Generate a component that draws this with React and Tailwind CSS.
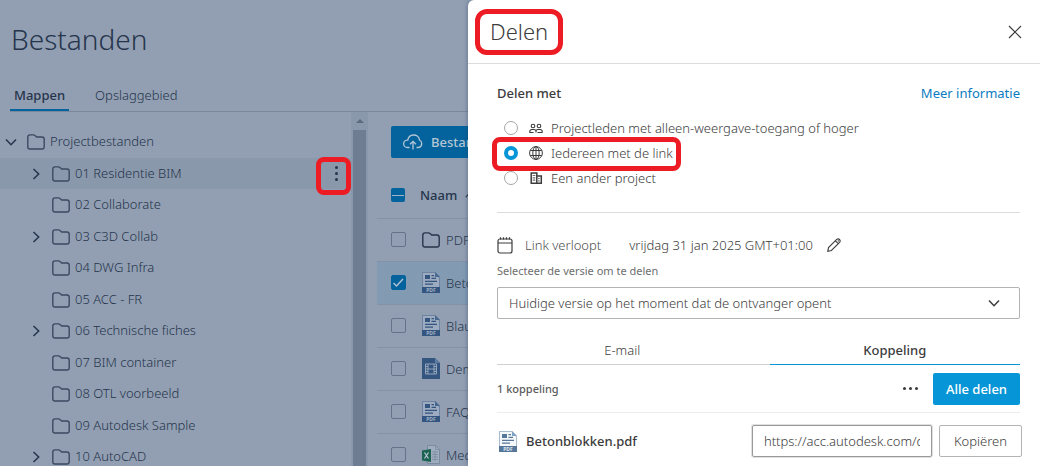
import React, { useState } from 'react';

const FOLDERS = [
  { name: '01 Residentie BIM', expandable: true, active: true },
  { name: '02 Collaborate' },
  { name: '03 C3D Collab', expandable: true },
  { name: '04 DWG Infra' },
  { name: '05 ACC - FR' },
  { name: '06 Technische fiches', expandable: true },
  { name: '07 BIM container' },
  { name: '08 OTL voorbeeld' },
  { name: '09 Autodesk Sample' },
  { name: '10 AutoCAD', expandable: true },
];

const FILES = [
  { name: 'PDF', type: 'folder' },
  { name: 'Betonblokken.pdf', type: 'pdf' },
  { name: 'Blau', type: 'pdf' },
  { name: 'Dem', type: 'video' },
  { name: 'FAQ', type: 'pdf' },
  { name: 'Med', type: 'excel' },
];

const SHARE_OPTIONS = [
  { id: 'members', label: 'Projectleden met alleen-weergave-toegang of hoger', Icon: PeopleIcon },
  { id: 'link', label: 'Iedereen met de link', Icon: GlobeIcon, marked: true },
  { id: 'project', label: 'Een ander project', Icon: BuildingIcon },
];

function Chevron({ className }) {
  return (
    <svg viewBox="0 0 12 12" className={className} fill="none" stroke="currentColor" strokeWidth="1.5">
      <path d="M1 3.5 6 8.7l5-5.2" />
    </svg>
  );
}

function FolderIcon({ className }) {
  return (
    <svg viewBox="0 0 18 16" className={className} fill="none" stroke="currentColor" strokeWidth="1.4">
      <path d="M.8 3.2Q.8.9 3 .9h3.4c.9 0 1.3.3 1.9.9l.9.8c.4.3.8.4 1.3.4h4.5q2.200 0 2.200 2.200v7.500q0 2.300-2.200 2.300H3Q.8 15 .8 12.700Z" />
    </svg>
  );
}

function PdfIcon({ dimmed }) {
  return (
    <svg viewBox="0 0 18 21" className="h-[21px] w-[18px] shrink-0">
      <path d="M0 0h13l5 5v16H0Z" fill={dimmed ? '#6d83a1' : '#a9bbce'} />
      <path d="M1 1h11.500L17 5.500V15H1Z" fill={dimmed ? '#9cabbf' : '#f5f8fb'} />
      <path d="M13 0l5 5h-5Z" fill={dimmed ? '#47688f' : '#7fa2c6'} />
      <path d="M3 3h5v4H3ZM9.500 3h2.500v1.300H9.500ZM9.500 5.700h4.500V7H9.500ZM3 8.800h12v1.300H3ZM3 11.500h8v1.300H3Z" fill={dimmed ? '#34557f' : '#567799'} />
      <path d="M0 15h18v6H0Z" fill={dimmed ? '#34557f' : '#567799'} />
      <text x="9" y="20" textAnchor="middle" fontSize="5" fontWeight="700" fill={dimmed ? '#a3b1c4' : '#dfe6ee'}>PDF</text>
    </svg>
  );
}

function VideoIcon() {
  return (
    <svg viewBox="0 0 18 21" className="h-[21px] w-[18px] shrink-0">
      <path d="M0 0h13l5 5v16H0Z" fill="#34557f" />
      <path d="M13 0v5h5Z" fill="#5d7ca1" />
      <path d="M3.500 6h11v10h-11ZM6 6v10M12 6v10M6 11h6M3.500 8.500H6M3.500 11H6M3.500 13.500H6M12 8.500h2.500M12 11h2.500M12 13.500h2.500" fill="none" stroke="#93a5bb" strokeWidth="1" />
    </svg>
  );
}

function ExcelIcon() {
  return (
    <svg viewBox="0 0 18 21" className="h-[21px] w-[18px] shrink-0">
      <path d="M5.500 1.500h8l4 4v14h-12Z" fill="#a0adbf" stroke="#74859b" strokeWidth=".8" />
      <path d="M10 8h6M10 10.500h6M10 13h6M10 15.500h6M13 7v10M13.500 1.500v4h4" fill="none" stroke="#7b8ca2" strokeWidth=".8" />
      <path d="M0 6.500 9 5v13l-9-1.500Z" fill="#1c6352" />
      <path d="m2.500 8.500 4 6M6.500 8.500l-4 6" stroke="#b6c3d0" strokeWidth="1.300" />
    </svg>
  );
}

function FileIcon({ type }) {
  if (type === 'folder') return <FolderIcon className="h-4 w-[18px] shrink-0 text-[#26354b]" />;
  if (type === 'video') return <VideoIcon />;
  if (type === 'excel') return <ExcelIcon />;
  return <PdfIcon dimmed />;
}

function PeopleIcon() {
  return (
    <svg viewBox="0 0 14 14" className="size-3.5" fill="none" stroke="currentColor" strokeWidth="1.100">
      <circle cx="4" cy="5" r="1.800" />
      <circle cx="10" cy="5" r="1.800" />
      <path d="M.7 11.500V11c0-1.500 1-2.500 2.300-2.500h2c1.200 0 2 .8 2 2v1M7 10.500c0-1.200.9-2 2-2h2c1.300 0 2.300 1 2.300 2.500v.5M.5 11.500h4M8.500 11.500h5" />
    </svg>
  );
}

function GlobeIcon() {
  return (
    <svg viewBox="0 0 14 14" className="size-3.5" fill="none" stroke="currentColor" strokeWidth="1">
      <circle cx="7" cy="7" r="6.400" />
      <ellipse cx="7" cy="7" rx="3.200" ry="6.400" />
      <path d="M1.300 4.500h11.400M1.300 9.500h11.400M7 .6v12.800" />
    </svg>
  );
}

function BuildingIcon() {
  return (
    <svg viewBox="0 0 14 14" className="size-3.5" fill="none" stroke="currentColor" strokeWidth="1.500">
      <path d="M2.200 12.300V2h5.600v10.300M7.800 5h4.500v7.300M1.500 12.300h11.500" />
      <path d="M3.700 4.500h2.600M3.700 6.800h2.600M3.700 9.100h2.600M9.300 7.500h1.700M9.300 9.800h1.700" strokeWidth="1.200" strokeDasharray="1 .5" />
    </svg>
  );
}

function CalendarIcon() {
  return (
    <svg viewBox="0 0 16 17" className="h-[17px] w-4 shrink-0" fill="none" stroke="currentColor" strokeWidth="1.200">
      <rect x="1" y="2" width="14" height="14" rx="2" />
      <path d="M1 6h14M3.500.3V2.500M6.500.3V2.500M9.500.3V2.500M12.500.3V2.500" />
    </svg>
  );
}

function PencilIcon() {
  return (
    <svg viewBox="0 0 14 14" className="size-3.5" fill="none" stroke="currentColor" strokeWidth="1.100">
      <path d="M.8 13.200 1.500 9.600 9.700 1.400Q11.200.2 12.500 1.500T12.600 4.300L4.400 12.500ZM8.400 2.800l2.800 2.800M10.800 2.500l.9.900" />
    </svg>
  );
}

// Hand-drawn red frame around a point of attention
function Highlight({ className }) {
  return <span aria-hidden="true" className={`pointer-events-none absolute border-[#ed1c24] ${className}`} />;
}

function FolderTree() {
  return (
    <nav className="min-w-0 flex-1 pt-3.5 text-[#26354b]">
      <div className="flex h-8 items-center pl-[5px]">
        <button type="button" aria-label="Inklappen">
          <Chevron className="size-3" />
        </button>
        <FolderIcon className="ml-2.5 h-4 w-[18px] text-[#3b4a61]" />
        <span className="ml-[5px] pb-0.5">Projectbestanden</span>
      </div>
      <ul>
        {FOLDERS.map((folder) => (
          <li
            key={folder.name}
            className={`relative flex items-center pl-[30px] odd:h-[31px] even:h-8 ${folder.active ? 'bg-[#8a98ac]' : ''}`}
          >
            <span className="flex w-[22px]">
              {folder.expandable && (
                <button type="button" aria-label="Uitklappen">
                  <Chevron className="size-3 -rotate-90" />
                </button>
              )}
            </span>
            <FolderIcon className="h-4 w-[18px] text-[#3b4a61]" />
            <span className="ml-[5px] pb-0.5">{folder.name}</span>
            {folder.active && (
              <>
                <button type="button" aria-label="Meer" className="ml-auto mr-[13px] flex flex-col gap-[3px]">
                  <i className="size-[3px] rounded-full bg-[#26354b]" />
                  <i className="size-[3px] rounded-full bg-[#26354b]" />
                  <i className="size-[3px] rounded-full bg-[#26354b]" />
                </button>
                <Highlight className="-top-px right-0 h-[38px] w-[35px] rounded-lg border-5" />
              </>
            )}
          </li>
        ))}
      </ul>
    </nav>
  );
}

function FileCheckbox({ label, defaultChecked }) {
  return (
    <label className="relative flex size-[15px]">
      <input
        type="checkbox"
        aria-label={label}
        defaultChecked={defaultChecked}
        className="peer size-[15px] appearance-none rounded-xs border border-[#64738a] checked:border-[#04639c] checked:bg-[#04639c]"
      />
      <svg viewBox="0 0 15 15" className="pointer-events-none absolute inset-0 hidden peer-checked:block" fill="none" stroke="#b4c3d3" strokeWidth="1.400">
        <path d="m2.500 8 3 3L12 4" />
      </svg>
    </label>
  );
}

function FileTable() {
  return (
    <section className="min-w-0 flex-1 pl-[9px] pt-3.5">
      <button type="button" className="ml-3.5 flex h-8 items-center gap-2 rounded-xs bg-[#04639c] px-3 font-medium text-[#b4c6d6]">
        <svg viewBox="0 0 20 16" className="h-4 w-5" fill="none" stroke="currentColor" strokeWidth="1.300">
          <path d="M6.500 13.500H4.500a3.700 3.700 0 0 1-.3-7.400h.6A6 6 0 0 1 10.500 1a5.800 5.800 0 0 1 6 5 4 4 0 0 1-1 7.500h-2M10 15.500V7.500M7 10.300l3-3 3 3" />
        </svg>
        Bestanden
      </button>
      <table className="mt-[15px] w-full">
        <thead>
          <tr className="h-[45px] border-b border-[#8492a6] text-left text-[#26354b]">
            <th className="w-[43px] pl-3.5">
              <button type="button" aria-label="Alles selecteren" className="flex size-3.5 items-center justify-center rounded-xs bg-[#04639c]">
                <i className="h-px w-3 bg-[#9fb4c8]" />
              </button>
            </th>
            <th colSpan={2} className="font-medium">
              <span className="flex items-center gap-2">
                Naam
                <Chevron className="size-2.5 rotate-180" />
              </span>
            </th>
          </tr>
        </thead>
        <tbody>
          {FILES.map((file, i) => (
            <tr key={file.name} className={`h-[43px] border-b border-[#8492a6] ${i === 1 ? 'bg-[#839bb2]' : ''}`}>
              <td className="pl-3.5">
                <FileCheckbox label={file.name} defaultChecked={i === 1} />
              </td>
              <td className="w-[26px] pl-0.5">
                <FileIcon type={file.type} />
              </td>
              <td className="whitespace-nowrap text-[#26354b]">{file.name}</td>
            </tr>
          ))}
        </tbody>
      </table>
    </section>
  );
}

function ShareDrawer() {
  const [target, setTarget] = useState('link');

  return (
    <aside className="absolute inset-y-0 right-0 w-[55%] overflow-hidden rounded-tl-md bg-white text-[#3c3c3c] shadow-[0_0_5px_rgba(30,60,100,0.5)]">
      <header className="flex h-16 items-center justify-between border-b border-[#dcdcdc] pl-[22px] pr-[18px]">
        <h2 className="relative text-[22px]">
          <span className="block pb-0.5">Delen</span>
          <Highlight className="-inset-x-[15px] -inset-y-3 rounded-xl border-5" />
        </h2>
        <button type="button" aria-label="Sluiten">
          <svg viewBox="0 0 14 14" className="size-3.5" fill="none" stroke="currentColor" strokeWidth="1.200">
            <path d="m1 1 12 12M13 1 1 13" />
          </svg>
        </button>
      </header>

      <div className="pl-[29px] pr-5">
        <div className="flex items-center justify-between pt-[19px]">
          <h3 className="font-medium">Delen met</h3>
          <a href="#info" className="font-normal text-[#0a7cc1]">Meer informatie</a>
        </div>

        <fieldset className="mt-3 border-b border-[#dcdcdc] pb-[22px] pl-[7px]">
          {SHARE_OPTIONS.map(({ id, label, Icon, marked }) => (
            <label key={id} className="relative flex h-[25px] w-fit items-center">
              <input
                type="radio"
                name="target"
                checked={target === id}
                onChange={() => setTarget(id)}
                className="size-3.5 appearance-none rounded-full border border-[#a6a6a6] checked:border-4 checked:border-[#0696d7]"
              />
              <span className="ml-[11px] mr-2">
                <Icon />
              </span>
              {label}
              {marked && <Highlight className="-left-3 -right-2 -top-[3px] h-[34px] rounded-lg border-5" />}
            </label>
          ))}
        </fieldset>

        <div className="mt-[22px] flex h-5 items-center">
          <CalendarIcon />
          <span className="ml-3 text-[#4f4f4f]">Link verloopt</span>
          <span className="ml-7">vrijdag 31 jan 2025 GMT+01:00</span>
          <button type="button" aria-label="Bewerken" className="ml-3.5">
            <PencilIcon />
          </button>
        </div>

        <label htmlFor="version" className="mt-2 block text-[11px] font-normal leading-4 text-[#6e6e6e]">
          Selecteer de versie om te delen
        </label>
        <div className="relative mt-2">
          <select id="version" className="h-8 w-full appearance-none rounded-xs border border-[#b3b3b3] bg-white pl-[11px] pr-10">
            <option>Huidige versie op het moment dat de ontvanger opent</option>
          </select>
          <Chevron className="pointer-events-none absolute right-5 top-2.5 size-3" />
        </div>

        <div role="tablist" className="mt-4 flex gap-[22px] border-b border-[#d0d0d0] text-center">
          <button type="button" role="tab" className="h-[29px] flex-1">E-mail</button>
          <button type="button" role="tab" aria-selected="true" className="-mb-px h-[30px] flex-1 border-b border-b-[#0696d7] font-medium">
            Koppeling
          </button>
        </div>

        <div className="flex h-12 items-center border-b border-[#ececec]">
          <span className="text-[11px] font-medium text-[#5a5a5a]">1 koppeling</span>
          <button type="button" aria-label="Meer opties" className="ml-auto mr-[15px] flex gap-[3px]">
            <i className="size-[3px] rounded-full bg-current" />
            <i className="size-[3px] rounded-full bg-current" />
            <i className="size-[3px] rounded-full bg-current" />
          </button>
          <button type="button" className="h-8 rounded-xs bg-[#0696d7] px-[13px] font-medium text-white">Alle delen</button>
        </div>

        <div className="-mr-0.5 flex items-center pl-0.5 pt-3">
          <PdfIcon />
          <span className="ml-[9px] font-medium">Betonblokken.pdf</span>
          <input
            aria-label="Koppeling"
            readOnly
            defaultValue="https://acc.autodesk.com/docs"
            className="ml-auto h-8 w-[180px] rounded-xs border border-[#999] px-[11px] shadow-[0_0_0_1px_#e0e0e0] outline-none"
          />
          <button type="button" className="ml-[7px] h-8 rounded-xs border border-[#b3b3b3] px-3.5">Kopiëren</button>
        </div>
      </div>
    </aside>
  );
}

export default function App() {
  return (
    <div className="relative flex h-screen flex-col overflow-hidden bg-[#929fb3] font-['Noto_Sans','Open_Sans',sans-serif] text-[13px] font-light leading-5">
      <h1 className="px-[11px] pt-[19px] text-[28px] leading-10 text-[#26354b]">Bestanden</h1>
      <div role="tablist" className="ml-2.5 mt-[23px] flex h-[30px] shrink-0 gap-[22px] border-b border-[#7a889d] text-[#26354b]">
        <button type="button" role="tab" aria-selected="true" className="border-b-2 border-[#04639c] px-1 pb-0.5 font-medium">
          Mappen
        </button>
        <button type="button" role="tab" className="px-1 pb-1">Opslaggebied</button>
      </div>
      <div className="flex min-h-0 flex-1">
        <div className="flex w-[368px] shrink-0">
          <FolderTree />
          <div className="flex w-[17px] flex-col items-center bg-[#8a98ac]">
            <i className="my-[7px] border-x-4 border-b-4 border-x-transparent border-b-[#5c6a80]" />
            <i className="w-[13px] flex-1 bg-[#6e7d92]" />
          </div>
        </div>
        <FileTable />
      </div>
      <ShareDrawer />
    </div>
  );
}
